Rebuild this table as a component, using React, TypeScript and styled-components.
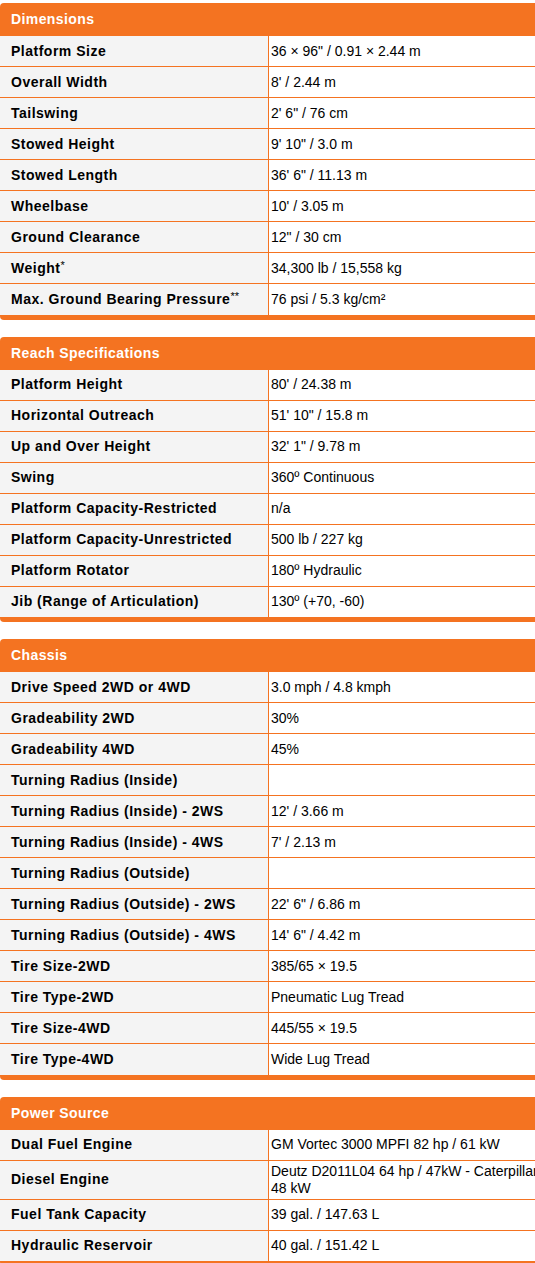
import React from "react";
import styled, { createGlobalStyle } from "styled-components";

const ORANGE = "#f47321";

const GlobalStyle = createGlobalStyle`
  html, body {
    margin: 0;
    padding: 0;
    overflow: hidden;
    background: #ffffff;
    font-family: "Liberation Sans", Arial, sans-serif;
  }
`;

const Page = styled.div`
  padding-top: 3px;
  width: 650px;
  display: flex;
  flex-direction: column;
  gap: 17px;
`;

const Section = styled.section`
  background-color: ${ORANGE};
  border-radius: 4px;
  overflow: hidden;
  padding-bottom: 5px;
`;

const SectionTitle = styled.h2`
  margin: 0;
  height: 32px;
  display: flex;
  align-items: center;
  padding-left: 11px;
  color: #ffffff;
  font-size: 14px;
  font-weight: bold;
  letter-spacing: 0.4px;
`;

const SpecTable = styled.table`
  width: 100%;
  border-collapse: collapse;
  table-layout: fixed;
  font-size: 14px;
  line-height: 17px;
  color: #000000;
`;

const Row = styled.tr`
  border-top: 1px solid ${ORANGE};
  height: 31px;
`;

const Label = styled.th`
  width: 257px;
  padding: 2px 0 2px 11px;
  background-color: #f4f4f4;
  text-align: left;
  vertical-align: middle;
  font-weight: bold;
  letter-spacing: 0.5px;
  white-space: nowrap;
`;

const Value = styled.td`
  padding: 2px 2px;
  background-color: #ffffff;
  border-left: 1px solid ${ORANGE};
  vertical-align: middle;
`;

const Note = styled.sup`
  font-size: 11px;
  font-weight: normal;
  letter-spacing: 0;
  line-height: 0;
  vertical-align: 4px;
`;

interface ISpec {
  label: string;
  value: string;
  note?: string;
}

interface IGroup {
  title: string;
  specs: ISpec[];
}

const groups: IGroup[] = [
  {
    title: "Dimensions",
    specs: [
      { label: "Platform Size", value: "36 × 96\" / 0.91 × 2.44 m" },
      { label: "Overall Width", value: "8' / 2.44 m" },
      { label: "Tailswing", value: "2' 6\" / 76 cm" },
      { label: "Stowed Height", value: "9' 10\" / 3.0 m" },
      { label: "Stowed Length", value: "36' 6\" / 11.13 m" },
      { label: "Wheelbase", value: "10' / 3.05 m" },
      { label: "Ground Clearance", value: "12\" / 30 cm" },
      { label: "Weight", note: "*", value: "34,300 lb / 15,558 kg" },
      { label: "Max. Ground Bearing Pressure", note: "**", value: "76 psi / 5.3 kg/cm²" },
    ],
  },
  {
    title: "Reach Specifications",
    specs: [
      { label: "Platform Height", value: "80' / 24.38 m" },
      { label: "Horizontal Outreach", value: "51' 10\" / 15.8 m" },
      { label: "Up and Over Height", value: "32' 1\" / 9.78 m" },
      { label: "Swing", value: "360º Continuous" },
      { label: "Platform Capacity-Restricted", value: "n/a" },
      { label: "Platform Capacity-Unrestricted", value: "500 lb / 227 kg" },
      { label: "Platform Rotator", value: "180º Hydraulic" },
      { label: "Jib (Range of Articulation)", value: "130º (+70, -60)" },
    ],
  },
  {
    title: "Chassis",
    specs: [
      { label: "Drive Speed 2WD or 4WD", value: "3.0 mph / 4.8 kmph" },
      { label: "Gradeability 2WD", value: "30%" },
      { label: "Gradeability 4WD", value: "45%" },
      { label: "Turning Radius (Inside)", value: "" },
      { label: "Turning Radius (Inside) - 2WS", value: "12' / 3.66 m" },
      { label: "Turning Radius (Inside) - 4WS", value: "7' / 2.13 m" },
      { label: "Turning Radius (Outside)", value: "" },
      { label: "Turning Radius (Outside) - 2WS", value: "22' 6\" / 6.86 m" },
      { label: "Turning Radius (Outside) - 4WS", value: "14' 6\" / 4.42 m" },
      { label: "Tire Size-2WD", value: "385/65 × 19.5" },
      { label: "Tire Type-2WD", value: "Pneumatic Lug Tread" },
      { label: "Tire Size-4WD", value: "445/55 × 19.5" },
      { label: "Tire Type-4WD", value: "Wide Lug Tread" },
    ],
  },
  {
    title: "Power Source",
    specs: [
      { label: "Dual Fuel Engine", value: "GM Vortec 3000 MPFI 82 hp / 61 kW" },
      {
        label: "Diesel Engine",
        value: "Deutz D2011L04 64 hp / 47kW - Caterpillar 3044C 64 hp / 48 kW",
      },
      { label: "Fuel Tank Capacity", value: "39 gal. / 147.63 L" },
      { label: "Hydraulic Reservoir", value: "40 gal. / 151.42 L" },
    ],
  },
];

const SpecGroup: React.FunctionComponent<{ group: IGroup }> = ({ group }) => (
  <Section>
    <SectionTitle>{group.title}</SectionTitle>
    <SpecTable>
      <tbody>
        {group.specs.map((spec) => (
          <Row key={spec.label}>
            <Label>
              {spec.label}
              {spec.note && <Note>{spec.note}</Note>}
            </Label>
            <Value>{spec.value}</Value>
          </Row>
        ))}
      </tbody>
    </SpecTable>
  </Section>
);

const App: React.FunctionComponent = () => (
  <>
    <GlobalStyle />
    <Page>
      {groups.map((group) => (
        <SpecGroup key={group.title} group={group} />
      ))}
    </Page>
  </>
);

export default App;
